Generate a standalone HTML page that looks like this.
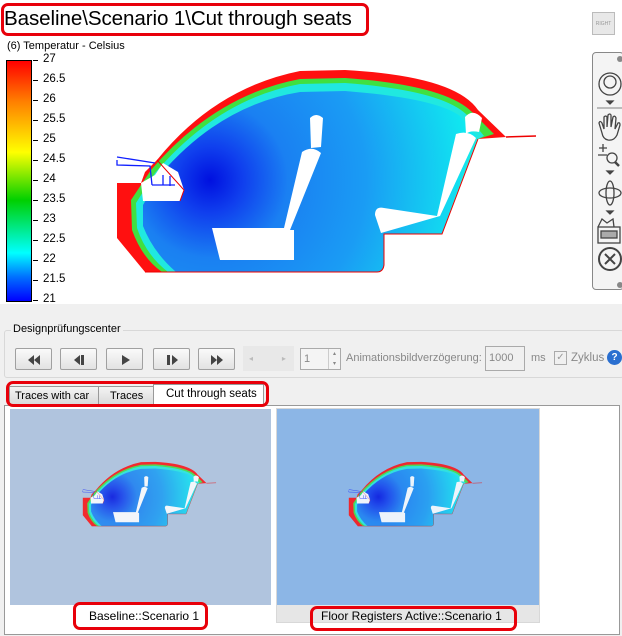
<!DOCTYPE html>
<html><head><style>
*{margin:0;padding:0;box-sizing:border-box}
body{width:622px;height:636px;overflow:hidden;background:#f0f0f0;font-family:"Liberation Sans",sans-serif;position:relative;font-size:11px;color:#000}
.a{position:absolute}
.btn{position:absolute;top:348px;width:37px;height:22px;border:1px solid #a0a0a0;border-radius:2px;background:linear-gradient(#fafafa,#e2e2e2)}
.btn svg{position:absolute;left:0;top:0}
.tab{position:absolute;top:386px;height:19px;border:1px solid #999;background:linear-gradient(#f4f4f4,#dadada);font-size:11px;padding:3px 0 0 5px;white-space:nowrap}
.rb{position:absolute;border:3px solid #e8000a;border-radius:7px}
.lab{position:absolute;left:43px;font-size:11.5px}
.tick{position:absolute;left:33px;width:5px;height:1px;background:#000}
</style></head><body>
<div class="a" style="left:0;top:0;width:622px;height:304px;background:#fff"></div>
<div class="a" style="left:4px;top:5px;font-size:20.6px;line-height:28px;white-space:nowrap;letter-spacing:-0.1px">Baseline\Scenario 1\Cut through seats</div>
<div class="rb" style="left:1px;top:3px;width:368px;height:33px"></div>
<div class="a" style="left:7px;top:40px;font-size:11px">(6) Temperatur - Celsius</div>
<div class="a" style="left:6px;top:60px;width:26px;height:242px;border:1px solid #000;background:linear-gradient(#ff0000,#ff8000 17%,#ffff00 38%,#00d000 58%,#00ffff 80%,#0070ff 90%,#0000ff)"></div>
<div class="lab" style="top:53px">27</div><div class="lab" style="top:73px">26.5</div><div class="lab" style="top:93px">26</div><div class="lab" style="top:113px">25.5</div><div class="lab" style="top:133px">25</div><div class="lab" style="top:153px">24.5</div><div class="lab" style="top:173px">24</div><div class="lab" style="top:193px">23.5</div><div class="lab" style="top:213px">23</div><div class="lab" style="top:233px">22.5</div><div class="lab" style="top:253px">22</div><div class="lab" style="top:273px">21.5</div><div class="lab" style="top:293px">21</div>
<div class="tick" style="top:60px"></div><div class="tick" style="top:80px"></div><div class="tick" style="top:100px"></div><div class="tick" style="top:120px"></div><div class="tick" style="top:140px"></div><div class="tick" style="top:160px"></div><div class="tick" style="top:180px"></div><div class="tick" style="top:200px"></div><div class="tick" style="top:220px"></div><div class="tick" style="top:240px"></div><div class="tick" style="top:260px"></div><div class="tick" style="top:280px"></div><div class="tick" style="top:300px"></div>
<svg class="a" style="left:0;top:0" width="622" height="636">
<defs><radialGradient id="g" cx="210" cy="180" r="260" gradientUnits="userSpaceOnUse"><stop offset="0" stop-color="#0010e0"/><stop offset="0.13" stop-color="#1040ee"/><stop offset="0.3" stop-color="#1a80f2"/><stop offset="0.6" stop-color="#1a9cf4"/><stop offset="1" stop-color="#10e8f0"/></radialGradient>
<g id="car">
<path d="M145,272 L117,238 L117,183 L141,183 L145,172 L157,160 Q215,88 300,71 L345,70 Q455,76 478,110 L506,137 L478,139 L442,234 L384,234 L384,265 Q383,272 377,272 Z" fill="#ff1010"/>
<path d="M162,272 Q142,258 132,230 L131,200 L151,170 Q215,95 300,79 L345,78 Q445,85 472,112 L494,134 L478,139 L442,234 L384,234 L384,265 Q383,272 377,272 Z" fill="#40e040"/>
<path d="M168,272 Q146,255 137,228 L136,203 L155,173 Q218,99 300,84 L345,83 Q440,90 466,114 L484,136 L478,139 L442,234 L384,234 L384,265 Q383,272 377,272 Z" fill="#20e8e0"/>
<path d="M176,272 Q153,252 143,226 L143,205 L160,175 Q220,105 300,92 L345,91 Q435,98 460,116 L476,136 L442,234 L384,234 L384,265 Q383,272 377,272 Z" fill="url(#g)"/>
<path d="M141,183 L143,201 L180,201 L184,190 L178,172 L163,163 L155,175 Z" fill="#fff"/>
<path d="M117,157 L155,163 M117,160 L117,165 L150,166 L152,185 M152,185 L175,185 M163,175 L163,185 M170,176 L170,186" fill="none" stroke="#1020ff" stroke-width="1.3"/>
<path d="M157,160 L184,190 L180,201" fill="none" stroke="#e00" stroke-width="1"/>
<path d="M310,118 Q316,112 323,118 L321,147 L311,148 Z M302,152 Q312,145 321,153 L290,230 L294,230 L294,260 L220,260 L212,228 L284,228 Z M465,117 Q473,108 482,118 L479,132 Q470,130 466,134 Z M456,134 Q468,130 476,138 L440,216 L381,233 L375,215 Q375,206 384,208 L437,216 Z" fill="#fff"/>
<path d="M478,139 L442,234 L384,234 L384,265 Q383,272 377,272 L145,272" fill="none" stroke="#e00" stroke-width="1"/>
<path d="M506,137 L536,136" stroke="#e00" stroke-width="1.5"/>
</g></defs>
<use href="#car"/>
</svg>
<div class="a" style="left:592px;top:12px;width:23px;height:23px;border:1px solid #bbb;background:#e8e8e8;font-size:5px;color:#999;text-align:center;line-height:22px">RIGHT</div>
<div class="a" style="left:592px;top:52px;width:32px;height:238px;border:1px solid #888;border-radius:4px;background:#f4f4f4">
<svg width="32" height="238" style="position:absolute;left:0;top:0" fill="none" stroke="#444" stroke-width="1.3">
<circle cx="17" cy="31" r="11"/><circle cx="17" cy="29" r="6"/>
<path d="M14,48 l3,3 l3,-3z" fill="#444"/>
<path d="M4,55 H32" stroke="#999"/>
<path d="M9,80 L6,70 Q7,67 9,70 L11,76 L11,64 Q13,62 14,64 L14,74 L15,62 Q17,60 18,62 L18,74 L20,64 Q22,62 23,65 L22,76 L25,70 Q27,69 27,72 L24,82 Q21,88 15,87 Q10,86 9,80Z"/>
<path d="M6,95 H14 M10,91 V99 M5,102 H14"/><circle cx="19" cy="105" r="5"/><path d="M22,109 L26,113" stroke-width="2.5"/>
<path d="M14,118 l3,3 l3,-3z" fill="#444"/>
<ellipse cx="17" cy="140" rx="11" ry="5"/><ellipse cx="17" cy="140" rx="4" ry="12"/>
<path d="M14,158 l3,3 l3,-3z" fill="#444"/>
<rect x="5" y="174" width="22" height="16"/><rect x="8" y="178" width="16" height="7" fill="#aaa"/><path d="M5,174 L9,166 L14,170 L20,166 L21,174"/>
<circle cx="17" cy="206" r="11" stroke-width="2"/><path d="M12,201 L22,211 M22,201 L12,211" stroke-width="2"/>
<circle cx="27" cy="6" r="3" fill="#888" stroke="none"/><circle cx="27" cy="232" r="3" fill="#888" stroke="none"/>
</svg></div>
<div class="a" style="left:4px;top:330px;width:620px;height:48px;border:1px solid #d8d8d8;border-radius:3px"></div>
<div class="a" style="left:11px;top:323px;background:#f0f0f0;padding:0 2px">Designprüfungscenter</div>
<div class="btn" style="left:15px"><svg width="37" height="22" fill="#444"><path d="M12,11 l6,-5 v10z M18,11 l6,-5 v10z"/></svg></div>
<div class="btn" style="left:60px"><svg width="37" height="22" fill="#444"><path d="M13,11 l6,-5 v10z"/><rect x="20" y="6" width="3" height="10"/></svg></div>
<div class="btn" style="left:106px"><svg width="37" height="22" fill="#444"><path d="M15,6 l8,5 l-8,5z"/></svg></div>
<div class="btn" style="left:153px"><svg width="37" height="22" fill="#444"><rect x="13" y="6" width="3" height="10"/><path d="M18,6 l6,5 l-6,5z"/></svg></div>
<div class="btn" style="left:198px"><svg width="37" height="22" fill="#444"><path d="M12,6 l6,5 l-6,5z M18,6 l6,5 l-6,5z"/></svg></div>
<div class="a" style="left:243px;top:346px;width:51px;height:25px;background:#e8e8e8;color:#bbb;font-size:8px;line-height:25px;padding-left:6px">◂&nbsp;&nbsp;&nbsp;&nbsp;&nbsp;&nbsp;&nbsp;&nbsp;&nbsp;&nbsp;&nbsp;&nbsp;&nbsp;▸</div>
<div class="a" style="left:300px;top:348px;width:41px;height:22px;border:1px solid #aaa;color:#888;font-size:11px;line-height:20px;padding-left:3px;background:#f4f4f4">1<span style="position:absolute;right:0;top:0;width:12px;height:20px;border-left:1px solid #ccc;font-size:6px;line-height:10px;text-align:center">▴<br>▾</span></div>
<div class="a" style="left:346px;top:352px;color:#888;font-size:11px;white-space:nowrap">Animationsbildverzögerung:</div>
<div class="a" style="left:485px;top:346px;width:40px;height:25px;border:1px solid #aaa;color:#888;line-height:23px;padding-left:3px">1000</div>
<div class="a" style="left:531px;top:352px;color:#888">ms</div>
<div class="a" style="left:554px;top:351px;width:13px;height:14px;border:1px solid #aaa;color:#999;font-size:10px;text-align:center">✓</div>
<div class="a" style="left:571px;top:352px;color:#888;font-size:11.5px">Zyklus</div>
<div class="a" style="left:607px;top:350px;width:15px;height:15px;border-radius:50%;background:#2a6fd0;color:#fff;font-size:10px;text-align:center;line-height:15px;font-weight:bold">?</div>
<div class="a" style="left:4px;top:405px;width:616px;height:230px;border:1px solid #999;background:#fff"></div>
<div class="tab" style="left:9px;width:90px">Traces with car</div>
<div class="tab" style="left:98px;width:56px;padding-left:11px">Traces</div>
<div class="tab" style="left:153px;top:384px;height:22px;width:111px;background:#fff;border-bottom:none;padding-left:12px;font-size:11.5px">Cut through seats</div>
<div class="rb" style="left:6px;top:381px;width:263px;height:26px"></div>
<div class="a" style="left:10px;top:409px;width:261px;height:196px;background:#b0c4de"></div>
<div class="a" style="left:276px;top:408px;width:264px;height:215px;background:#e6e6e6;border:1px solid #d8d8d8"></div>
<div class="a" style="left:277px;top:409px;width:262px;height:196px;background:#8cb6e6"></div>
<svg class="a" style="left:0;top:0" width="622" height="636">
<use href="#car" transform="translate(45.6,439.6) scale(0.318)" opacity="0.85"/>
<use href="#car" transform="translate(311.6,439.6) scale(0.318)" opacity="0.85"/>
</svg>
<div class="a" style="left:89px;top:609px;font-size:12px">Baseline::Scenario 1</div>
<div class="rb" style="left:73px;top:602px;width:135px;height:28px"></div>
<div class="a" style="left:321px;top:609px;font-size:12px">Floor Registers Active::Scenario 1</div>
<div class="rb" style="left:310px;top:606px;width:207px;height:25px"></div>
</body></html>
